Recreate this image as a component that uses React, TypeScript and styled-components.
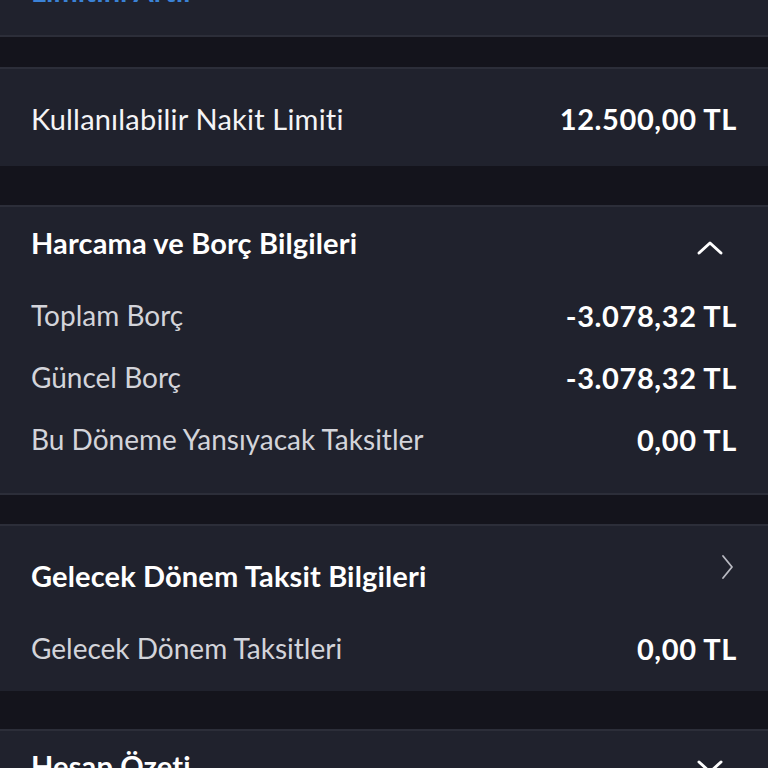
import React from 'react';
import styled, { createGlobalStyle } from 'styled-components';

const GlobalStyle = createGlobalStyle`
  html, body {
    margin: 0;
    padding: 0;
    background: #14141c;
    font-family: 'Lato', 'Noto Sans', sans-serif;
    -webkit-font-smoothing: antialiased;
  }
`;

type Row = { label: string; value: string };

const debtRows: Row[] = [
  { label: 'Toplam Borç', value: '-3.078,32 TL' },
  { label: 'Güncel Borç', value: '-3.078,32 TL' },
  { label: 'Bu Döneme Yansıyacak Taksitler', value: '0,00 TL' },
];

export default function App() {
  return (
    <>
      <GlobalStyle />
      <Page>
        <Card $bottomBorder>
          <LinkText>Limitini Artır</LinkText>
        </Card>

        <Card $gap={30}>
          <SummaryRow>
            <SummaryLabel>Kullanılabilir Nakit Limiti</SummaryLabel>
            <Value>12.500,00 TL</Value>
          </SummaryRow>
        </Card>

        <Card $gap={39} $bottomBorder>
          <SectionHeader $top={17}>
            <SectionTitle>Harcama ve Borç Bilgileri</SectionTitle>
            <ChevronUp />
          </SectionHeader>
          <Rows $bottom={23}>
            {debtRows.map(r => (
              <DetailRow key={r.label}>
                <DetailLabel>{r.label}</DetailLabel>
                <Value>{r.value}</Value>
              </DetailRow>
            ))}
          </Rows>
        </Card>

        <Card $gap={29}>
          <SectionHeader $top={31}>
            <SectionTitle>Gelecek Dönem Taksit Bilgileri</SectionTitle>
            <ChevronRight />
          </SectionHeader>
          <Rows $bottom={12}>
            <DetailRow>
              <DetailLabel>Gelecek Dönem Taksitleri</DetailLabel>
              <Value>0,00 TL</Value>
            </DetailRow>
          </Rows>
        </Card>

        <Card $gap={38}>
          <SectionHeader $top={16}>
            <SectionTitle>Hesap Özeti</SectionTitle>
            <ChevronDown />
          </SectionHeader>
        </Card>
      </Page>
    </>
  );
}

function ChevronUp() {
  return (
    <IconBox $color="#ffffff" $shift={6}>
      <svg width="28" height="18" viewBox="0 0 28 18" fill="none">
        <path
          d="M3 14L14 4l11 10"
          stroke="currentColor"
          strokeWidth={3}
          strokeLinecap="round"
          strokeLinejoin="round"
        />
      </svg>
    </IconBox>
  );
}

function ChevronDown() {
  return (
    <IconBox $color="#ffffff" $shift={2}>
      <svg width="28" height="18" viewBox="0 0 28 18" fill="none">
        <path
          d="M3 4l11 10L25 4"
          stroke="currentColor"
          strokeWidth={3}
          strokeLinecap="round"
          strokeLinejoin="round"
        />
      </svg>
    </IconBox>
  );
}

function ChevronRight() {
  return (
    <IconBox $color="#b9bac2" $shift={-8} $right={1}>
      <svg width="16" height="26" viewBox="0 0 16 26" fill="none">
        <path
          d="M3 2l9 11-9 11"
          stroke="currentColor"
          strokeWidth={1.8}
          strokeLinecap="round"
          strokeLinejoin="round"
        />
      </svg>
    </IconBox>
  );
}

const Page = styled.div`
  margin-top: -40px;
  display: flex;
  flex-direction: column;
  background: #14141c;
  min-height: 900px;
`;

const Card = styled.section<{ $gap?: number; $bottomBorder?: boolean }>`
  margin-top: ${p => p.$gap ?? 0}px;
  background: #20222d;
  border-top: 2px solid #2c2e39;
  border-bottom: ${p => (p.$bottomBorder ? '2px solid #2c2e39' : 'none')};
  padding: 0 31px 0 31px;
`;

const LinkText = styled.div`
  height: 73px;
  display: flex;
  align-items: flex-end;
  font-size: 29px;
  font-weight: 700;
  color: #3b82d6;
  line-height: 1;
  padding-bottom: 30px;
  box-sizing: border-box;
`;

const SummaryRow = styled.div`
  display: flex;
  justify-content: space-between;
  align-items: center;
  padding: 31px 0 30px;
  height: 36px;
`;

const SummaryLabel = styled.span`
  font-size: 29px;
  color: #f4f4f6;
  letter-spacing: 0.2px;
`;

const Value = styled.span`
  font-size: 29px;
  font-weight: 700;
  color: #ffffff;
  letter-spacing: 0.6px;
`;

const SectionHeader = styled.div<{ $top: number }>`
  display: flex;
  justify-content: space-between;
  align-items: center;
  padding-top: ${p => p.$top}px;
  height: 36px;
`;

const SectionTitle = styled.h3`
  margin: 0;
  font-size: 29px;
  font-weight: 700;
  color: #ffffff;
  letter-spacing: 0.15px;
`;

const IconBox = styled.span<{ $color: string; $shift?: number; $right?: number }>`
  display: flex;
  align-items: center;
  justify-content: center;
  margin-right: ${p => p.$right ?? 13}px;
  color: ${p => p.$color};
  transform: translateY(${p => p.$shift ?? 4}px);
`;

const Rows = styled.div<{ $bottom: number }>`
  display: flex;
  flex-direction: column;
  padding-top: 24px;
  padding-bottom: ${p => p.$bottom}px;
`;

const DetailRow = styled.div`
  display: flex;
  justify-content: space-between;
  align-items: center;
  height: 62px;
`;

const DetailLabel = styled.span`
  font-size: 28px;
  color: #d3d4da;
  letter-spacing: 0;
`;
